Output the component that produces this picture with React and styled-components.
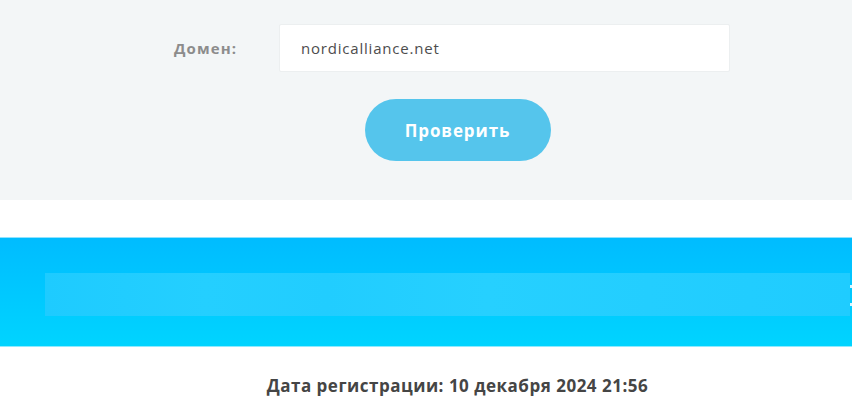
import React from "react";
import styled, { createGlobalStyle } from "styled-components";

const Global = createGlobalStyle`
  html, body { margin: 0; padding: 0; background: #ffffff; overflow: hidden; }
  body { font-family: "Open Sans", "Lato", sans-serif; }
`;

const Page = styled.div`
  width: 852px;
  height: 406px;
  overflow: hidden;
`;

const FormSection = styled.section`
  background: #f3f6f7;
  padding: 24px 0 39px;
`;

const Inner = styled.div`
  width: 915px;
  display: flex;
  flex-direction: column;
`;

const FormRow = styled.div`
  display: flex;
  align-items: center;
  padding-left: 174px;
`;

const Label = styled.label`
  width: 105px;
  font-family: "Open Sans", sans-serif;
  font-weight: 700;
  font-size: 15px;
  letter-spacing: 1.1px;
  color: #8c8c8c;
`;

const Input = styled.div`
  box-sizing: border-box;
  width: 451px;
  height: 48px;
  background: #ffffff;
  border: 1px solid #eceff0;
  border-radius: 2px;
  padding: 0 21px;
  display: flex;
  align-items: center;
  font-family: "Open Sans", sans-serif;
  font-size: 15px;
  letter-spacing: 0.8px;
  color: #4d4d4d;
`;

const ButtonRow = styled.div`
  display: flex;
  justify-content: center;
  margin-top: 27px;
`;

const Button = styled.button`
  width: 186px;
  height: 62px;
  border: none;
  border-radius: 31px;
  background: #55c5ec;
  color: #ffffff;
  font-family: "Open Sans", sans-serif;
  font-weight: 700;
  font-size: 17px;
  letter-spacing: 0.9px;
  cursor: pointer;
`;

const Band = styled.section`
  margin-top: 37px;
  height: 110px;
  box-sizing: border-box;
  border-top: 1px solid #8fe3ff;
  border-bottom: 1px solid #8eeaff;
  background: linear-gradient(180deg, #00bcff 0%, #00c8ff 50%, #00d4ff 100%);
  display: flex;
  align-items: flex-start;
  padding-top: 35px;
  padding-left: 45px;
`;

const BlurStrip = styled.div`
  width: 805px;
  height: 43px;
  flex-shrink: 0;
  background: linear-gradient(
    90deg,
    #1ecbff 0%,
    #24cfff 20%,
    #21cdff 35%,
    #26d0ff 55%,
    #23ceff 75%,
    #1fccff 100%
  );
`;

const EdgeMark = styled.div`
  flex-shrink: 0;
  width: 3px;
  height: 21px;
  margin-top: 12px;
  box-sizing: border-box;
  border-top: 3px solid rgba(255, 255, 255, 0.85);
  border-bottom: 3px solid rgba(255, 255, 255, 0.85);
`;

const RegDate = styled.p`
  width: 915px;
  margin: 27px 0 0;
  text-align: center;
  font-family: "Open Sans", sans-serif;
  font-weight: 700;
  font-size: 17px;
  letter-spacing: 0.5px;
  line-height: 24px;
  color: #454545;
`;

export default function App() {
  return (
    <Page>
      <Global />
      <FormSection>
        <Inner>
          <FormRow>
            <Label>Домен:</Label>
            <Input>nordicalliance.net</Input>
          </FormRow>
          <ButtonRow>
            <Button>Проверить</Button>
          </ButtonRow>
        </Inner>
      </FormSection>
      <Band>
        <BlurStrip />
        <EdgeMark />
      </Band>
      <RegDate>Дата регистрации: 10 декабря 2024 21:56</RegDate>
    </Page>
  );
}
